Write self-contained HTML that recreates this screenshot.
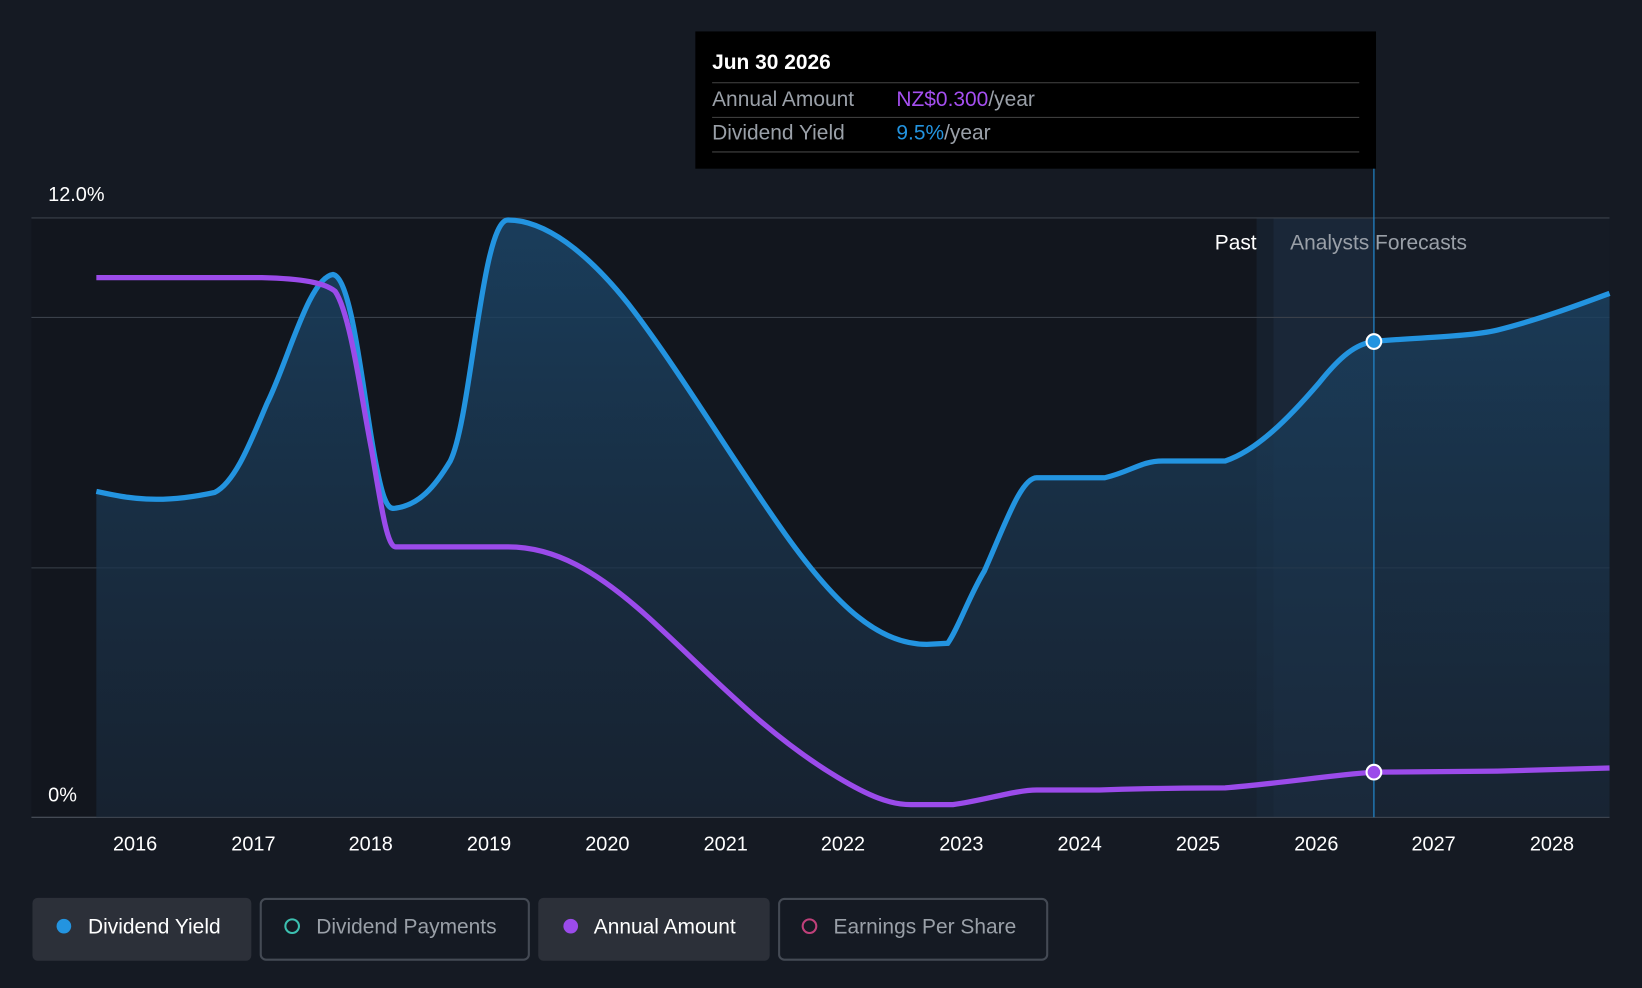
<!DOCTYPE html>
<html><head><meta charset="utf-8"><style>
html,body{margin:0;padding:0;background:#151a23;width:1642px;height:988px;overflow:hidden}
svg{display:block;font-family:"Liberation Sans",sans-serif}
</style></head><body>
<svg width="1642" height="988" viewBox="0 0 1568 943" preserveAspectRatio="none">
<defs>
<linearGradient id="ag" x1="0" y1="0" x2="0" y2="1">
<stop offset="0" stop-color="#1b4466" stop-opacity="0.85"/>
<stop offset="1" stop-color="#1a2a3c" stop-opacity="0.6"/>
</linearGradient>
</defs>
<rect width="1568" height="943" fill="#151a23"/>
<rect x="30" y="208" width="1170" height="572" fill="#12161e"/>
<rect x="1200" y="208" width="16" height="572" fill="#16202d"/>
<rect x="1216" y="208" width="97" height="572" fill="#1a2738"/>
<rect x="1313" y="208" width="224" height="572" fill="#151b25"/>
<g stroke="#3a404a" stroke-width="1">
<line x1="30" y1="208" x2="1537" y2="208"/>
<line x1="30" y1="303" x2="1537" y2="303"/>
<line x1="30" y1="542" x2="1537" y2="542"/>
<line x1="30" y1="780" x2="1537" y2="780" stroke="#555b64"/>
</g>
<path d="M92,469 C120,475 150,482 205,470 C225,460 240,420 255,385 C275,345 295,265 318,262 C335,265 345,360 355,420 C365,480 370,487 378,485 C400,482 415,465 430,440 C450,400 460,210 485,210 C520,210 560,240 600,290 C650,355 700,440 750,510 C800,580 840,615 885,615 L905,614 C915,600 925,570 940,545 C960,500 975,456 990,456 L1055,456 C1080,450 1090,440 1110,440 L1170,440 C1200,430 1230,400 1260,365 C1280,340 1295,328 1312,326 C1350,322 1400,322 1430,315 C1470,305 1510,290 1537,280 L1537,780 L92,780 Z" fill="url(#ag)"/>
<path d="M92,469 C120,475 150,482 205,470 C225,460 240,420 255,385 C275,345 295,265 318,262 C335,265 345,360 355,420 C365,480 370,487 378,485 C400,482 415,465 430,440 C450,400 460,210 485,210 C520,210 560,240 600,290 C650,355 700,440 750,510 C800,580 840,615 885,615 L905,614 C915,600 925,570 940,545 C960,500 975,456 990,456 L1055,456 C1080,450 1090,440 1110,440 L1170,440 C1200,430 1230,400 1260,365 C1280,340 1295,328 1312,326 C1350,322 1400,322 1430,315 C1470,305 1510,290 1537,280" fill="none" stroke="#2394e0" stroke-width="5"/>
<path d="M92,265 L250,265 C290,266 310,270 320,278 C335,300 345,380 355,430 C365,490 370,522 378,522 L485,522 C530,522 570,545 620,590 C680,645 730,700 800,742 C830,760 850,768 870,768 L910,768 C940,764 970,754 990,754 L1050,754 C1080,753 1110,752 1170,752 C1220,748 1270,740 1312,737 L1430,736 L1537,733" fill="none" stroke="#9b4bea" stroke-width="5"/>
<line x1="1312" y1="160" x2="1312" y2="780" stroke="#2394e0" stroke-width="1"/>
<circle cx="1312" cy="326" r="7" fill="#2394e0" stroke="#fff" stroke-width="2"/>
<circle cx="1312" cy="737" r="7" fill="#9b4bea" stroke="#fff" stroke-width="2"/>
<text x="46" y="192" fill="#fff" font-size="19">12.0%</text>
<text x="46" y="765" fill="#fff" font-size="19">0%</text>
<text x="1200" y="238" fill="#fff" font-size="20" text-anchor="end">Past</text>
<text x="1232" y="238" fill="#9aa0a8" font-size="20">Analysts Forecasts</text>
<g fill="#fff" font-size="19" text-anchor="middle">
<text x="129" y="812">2016</text><text x="242" y="812">2017</text><text x="354" y="812">2018</text>
<text x="467" y="812">2019</text><text x="580" y="812">2020</text><text x="693" y="812">2021</text>
<text x="805" y="812">2022</text><text x="918" y="812">2023</text><text x="1031" y="812">2024</text>
<text x="1144" y="812">2025</text><text x="1257" y="812">2026</text><text x="1369" y="812">2027</text>
<text x="1482" y="812">2028</text>
</g>
<rect x="664" y="30" width="650" height="131" fill="#000"/>
<text x="680" y="66" fill="#fff" font-size="20" font-weight="bold">Jun 30 2026</text>
<line x1="680" y1="79" x2="1298" y2="79" stroke="#444"/>
<text x="680" y="101" fill="#9aa0a8" font-size="20">Annual Amount</text>
<text x="856" y="101" font-size="20"><tspan fill="#a54ff0">NZ$0.300</tspan><tspan fill="#9aa0a8">/year</tspan></text>
<line x1="680" y1="112" x2="1298" y2="112" stroke="#444"/>
<text x="680" y="133" fill="#9aa0a8" font-size="20">Dividend Yield</text>
<text x="856" y="133" font-size="20"><tspan fill="#2394e0">9.5%</tspan><tspan fill="#9aa0a8">/year</tspan></text>
<line x1="680" y1="145" x2="1298" y2="145" stroke="#444"/>
<rect x="31" y="857" width="209" height="60" rx="5" fill="#2c3039"/>
<circle cx="61" cy="884" r="7" fill="#2394e0"/>
<text x="84" y="891" fill="#fff" font-size="20">Dividend Yield</text>
<rect x="249" y="858" width="256" height="58" rx="5" fill="none" stroke="#444a54" stroke-width="2"/>
<circle cx="279" cy="884" r="6.5" fill="none" stroke="#3cc0b0" stroke-width="2"/>
<text x="302" y="891" fill="#9aa0a8" font-size="20">Dividend Payments</text>
<rect x="514" y="857" width="221" height="60" rx="5" fill="#2c3039"/>
<circle cx="545" cy="884" r="7" fill="#9b4bea"/>
<text x="567" y="891" fill="#fff" font-size="20">Annual Amount</text>
<rect x="744" y="858" width="256" height="58" rx="5" fill="none" stroke="#444a54" stroke-width="2"/>
<circle cx="773" cy="884" r="6.5" fill="none" stroke="#c0407a" stroke-width="2"/>
<text x="796" y="891" fill="#9aa0a8" font-size="20">Earnings Per Share</text>
</svg>
</body></html>
